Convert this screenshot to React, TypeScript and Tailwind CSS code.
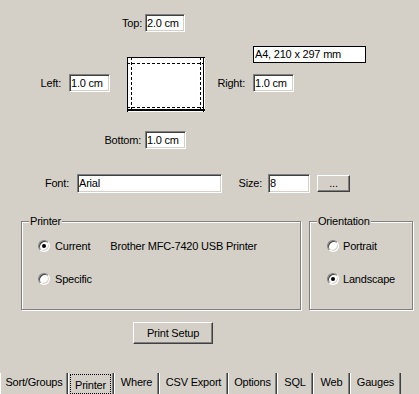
import React from "react";

const sunken =
  "bg-white border border-t-[#808080] border-l-[#808080] border-b-white border-r-white shadow-[inset_1px_1px_0_#404040,inset_-1px_-1px_0_#d4d0c8] pl-[1px] leading-[16px] whitespace-nowrap overflow-hidden";

const raised =
  "bg-[#d4d0c8] border border-t-white border-l-white border-b-[#404040] border-r-[#404040] shadow-[inset_-1px_-1px_0_#808080] flex items-center justify-center";

const TextBox = ({ value, className = "" }: { value: string; className?: string }) => (
  <div className={`${sunken} h-[18px] ${className}`}>{value}</div>
);

const Label = ({ text, className = "" }: { text: string; className?: string }) => (
  <div className={`text-right leading-[18px] ${className}`}>{text}</div>
);

const Radio = ({ checked }: { checked?: boolean }) => (
  <div className="w-[12px] h-[12px] rounded-full bg-white border border-t-[#808080] border-l-[#808080] border-b-white border-r-white shadow-[inset_1px_1px_0_#404040,inset_-1px_-1px_0_#d4d0c8] flex items-center justify-center shrink-0">
    {checked && <div className="w-[4px] h-[4px] rounded-full bg-black" />}
  </div>
);

const RadioRow = ({ label, checked, gap }: { label: string; checked?: boolean; gap: string }) => (
  <div className={`flex items-center h-[12px] ${gap}`}>
    <Radio checked={checked} />
    <span className="leading-[12px]">{label}</span>
  </div>
);

const GroupBox = ({
  title,
  className,
  children,
}: {
  title: string;
  className: string;
  children: React.ReactNode;
}) => (
  <div
    className={`relative border border-[#808080] shadow-[inset_1px_1px_0_#fff,1px_1px_0_#fff] ${className}`}
  >
    <span className="absolute -top-[7px] left-[7px] px-[1px] bg-[#d4d0c8] leading-[13px]">
      {title}
    </span>
    {children}
  </div>
);

const PagePreview = () => (
  <svg width="78" height="55" viewBox="0 0 78 55" className="block">
    <rect x="0" y="0" width="78" height="55" fill="#fff" />
    <g stroke="#000" strokeWidth="1" fill="none">
      <line x1="0" y1="0.5" x2="78" y2="0.5" />
      <line x1="0.5" y1="0" x2="0.5" y2="55" />
      <line x1="76.5" y1="0" x2="76.5" y2="55" />
      <line x1="0" y1="53" x2="78" y2="53" strokeWidth="2" />
      <line x1="4.5" y1="0" x2="4.5" y2="54" strokeDasharray="3 2" />
      <line x1="73.5" y1="0" x2="73.5" y2="54" strokeDasharray="3 2" />
      <line x1="0" y1="6.5" x2="77" y2="6.5" strokeDasharray="3 2" />
      <line x1="0" y1="50.5" x2="77" y2="50.5" strokeDasharray="3 2" />
    </g>
  </svg>
);

const tabs = [
  { name: "Sort/Groups", w: "w-[68px]" },
  { name: "Printer", w: "w-[46px]", active: true },
  { name: "Where", w: "w-[45px]" },
  { name: "CSV Export", w: "w-[69px]" },
  { name: "Options", w: "w-[49px]" },
  { name: "SQL", w: "w-[36px]" },
  { name: "Web", w: "w-[37px]" },
  { name: "Gauges", w: "w-[51px]" },
];

const App = () => {
  return (
    <div className="w-[419px] h-[394px] bg-[#d4d0c8] text-black text-[11px] tracking-[-0.2px] font-['Liberation_Sans',Arial,sans-serif] flex flex-col overflow-hidden">
      {/* top margin */}
      <div className="flex mt-[14px]">
        <Label text="Top:" className="w-[145px] pr-[3px]" />
        <TextBox value="2.0 cm" className="w-[40px]" />
      </div>

      {/* left / page / right */}
      <div className="flex h-[65px] mt-[14px]">
        <div className="flex w-[127px] mt-[28px] items-start">
          <Label text="Left:" className="w-[69px] pr-[8px]" />
          <TextBox value="1.0 cm" className="w-[41px]" />
        </div>
        <div className="mt-[11px]">
          <PagePreview />
        </div>
        <div className="flex flex-col">
          <div className="ml-[48px] w-[113px] h-[17px] bg-white border border-black pl-[1px] leading-[15px] whitespace-nowrap">
            A4, 210 x 297 mm
          </div>
          <div className="flex mt-[11px]">
            <Label text="Right:" className="w-[48px] pr-[8px]" />
            <TextBox value="1.0 cm" className="w-[41px]" />
          </div>
        </div>
      </div>

      {/* bottom margin */}
      <div className="flex mt-[20px]">
        <Label text="Bottom:" className="w-[145px] pr-[4px]" />
        <TextBox value="1.0 cm" className="w-[41px]" />
      </div>

      {/* font */}
      <div className="flex items-start mt-[25px]">
        <Label text="Font:" className="w-[77px] pr-[8px] leading-[19px]" />
        <div className={`${sunken} w-[145px] h-[19px] leading-[17px]`}>Arial</div>
        <Label text="Size:" className="w-[46px] pr-[6px] leading-[19px]" />
        <div className={`${sunken} w-[42px] h-[19px] leading-[17px]`}>8</div>
        <div className={`${raised} ml-[7px] mt-[1px] w-[33px] h-[17px] leading-[15px]`}>...</div>
      </div>

      {/* group boxes */}
      <div className="flex mt-[28px] pl-[21px]">
        <GroupBox title="Printer" className="w-[280px] h-[89px]">
          <div className="flex flex-col pl-[16px] pt-[18px] gap-[21px]">
            <div className="flex items-center h-[12px]">
              <RadioRow label="Current" checked gap="gap-[5px]" />
              <span className="ml-[20px] leading-[12px] whitespace-nowrap">
                Brother MFC-7420 USB Printer
              </span>
            </div>
            <RadioRow label="Specific" gap="gap-[5px]" />
          </div>
        </GroupBox>
        <GroupBox title="Orientation" className="ml-[8px] w-[104px] h-[89px]">
          <div className="flex flex-col pl-[17px] pt-[18px] gap-[21px]">
            <RadioRow label="Portrait" gap="gap-[4px]" />
            <RadioRow label="Landscape" checked gap="gap-[4px]" />
          </div>
        </GroupBox>
      </div>

      {/* print setup */}
      <div className="flex mt-[12px] pl-[133px]">
        <div className={`${raised} w-[80px] h-[22px]`}>Print Setup</div>
      </div>

      {/* tabs */}
      <div className="flex mt-auto h-[21px]">
        {tabs.map((t) =>
          t.active ? (
            <div
              key={t.name}
              className={`${t.w} h-full border-l border-l-white border-r border-r-[#404040] shadow-[inset_-1px_0_0_#808080] pl-[1px] pr-[2px] pt-[1px]`}
            >
              <div className="h-full border border-dotted border-black flex justify-center pt-[4px] leading-[13px]">
                {t.name}
              </div>
            </div>
          ) : (
            <div
              key={t.name}
              className={`${t.w} h-full border-l border-l-white border-r border-r-[#404040] shadow-[inset_-1px_0_0_#808080] flex justify-center pt-[3px] leading-[13px] whitespace-nowrap`}
            >
              {t.name}
            </div>
          )
        )}
      </div>
    </div>
  );
};

export default App;
